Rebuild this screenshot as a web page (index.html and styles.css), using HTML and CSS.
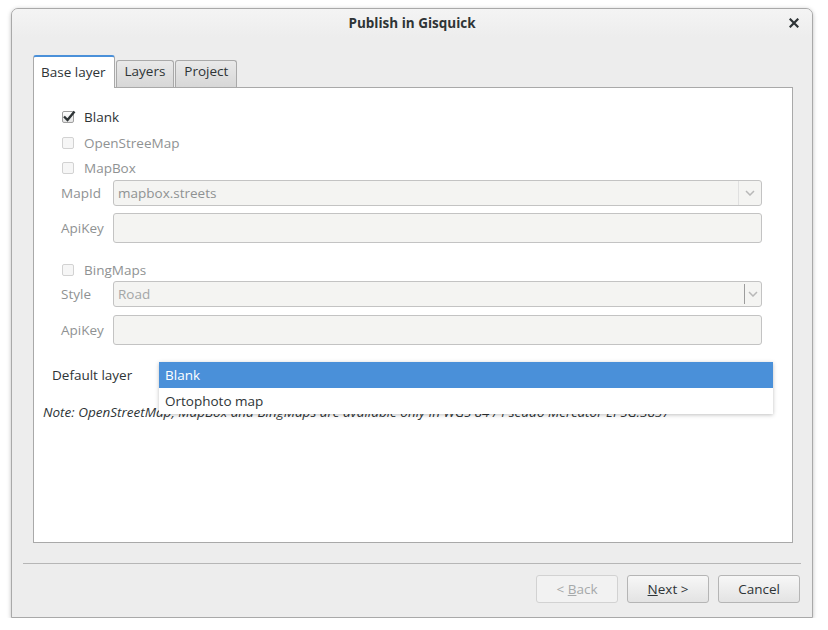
FILE: index.html
```html
<!DOCTYPE html>
<html>
<head>
<meta charset="utf-8">
<link rel="stylesheet" href="styles.css">
</head>
<body>
<div class="window">
  <div class="titlebar">
    <span class="title">Publish in Gisquick</span>
    <svg class="close" width="10" height="10" viewBox="0 0 10 10"><path d="M1.5 1.5 L8.5 8.5 M8.5 1.5 L1.5 8.5" stroke="#2e3436" stroke-width="2.2" stroke-linecap="square"/></svg>
  </div>
  <div class="body">
    <div class="tabs">
      <div class="tab active">Base layer</div>
      <div class="tab">Layers</div>
      <div class="tab">Project</div>
    </div>
    <div class="panel">
      <div class="group">
        <div class="inner">
          <div class="check-row r-blank">
            <span class="cb checked"><svg width="14" height="12" viewBox="0 0 14 12"><path d="M2 6.5 L5.5 10 L12.5 1.5" fill="none" stroke="#2e3436" stroke-width="2.4"/></svg></span>
            <span class="lbl">Blank</span>
          </div>
          <div class="check-row r-osm disabled">
            <span class="cb"></span><span class="lbl">OpenStreeMap</span>
          </div>
          <div class="check-row r-mapbox disabled">
            <span class="cb"></span><span class="lbl">MapBox</span>
          </div>
          <div class="field-row h26">
            <span class="flabel">MapId</span>
            <div class="combo">
              <span class="ctext">mapbox.streets</span>
              <span class="carrow"><svg width="10" height="6" viewBox="0 0 10 6"><path d="M1 1 L5 5 L9 1" fill="none" stroke="#b8b8b8" stroke-width="1.5"/></svg></span>
            </div>
          </div>
          <div class="field-row h30 mt7">
            <span class="flabel">ApiKey</span>
            <div class="entry"></div>
          </div>
          <div class="check-row r-bing disabled">
            <span class="cb"></span><span class="lbl">BingMaps</span>
          </div>
          <div class="field-row h26">
            <span class="flabel">Style</span>
            <div class="combo">
              <span class="ctext light">Road</span>
              <span class="carrow dark"><svg width="10" height="6" viewBox="0 0 10 6"><path d="M1 1 L5 5 L9 1" fill="none" stroke="#b8b8b8" stroke-width="1.5"/></svg></span>
            </div>
          </div>
          <div class="field-row h30 mt8">
            <span class="flabel">ApiKey</span>
            <div class="entry"></div>
          </div>
        </div>
        <div class="default-row">
          <span class="dlabel">Default layer</span>
          <div class="dcombo">
            <div class="popup">
              <div class="item sel">Blank</div>
              <div class="item">Ortophoto map</div>
            </div>
          </div>
        </div>
      </div>
      <div class="note">Note: OpenStreetMap, MapBox and BingMaps are available only in WGS 84 / Pseudo Mercator EPSG:3857</div>
    </div>
    <div class="sep"></div>
    <div class="buttons">
      <button class="btn disabled">&lt; <u>B</u>ack</button>
      <button class="btn"><u>N</u>ext &gt;</button>
      <button class="btn">Cancel</button>
    </div>
  </div>
</div>
</body>
</html>
```
FILE: styles.css
```css
html, body {
  margin: 0;
  padding: 0;
  background: #ffffff;
}
body {
  font-family: "Open Sans", "Noto Sans", sans-serif;
  font-size: 13px;
  color: #2e3436;
}
.window {
  margin: 8px 0 0 11px;
  width: 800px;
  height: 608px;
  border: 1px solid #a9a9a9;
  border-radius: 7px 7px 0 0;
  background: #ededed;
  box-shadow: 0 1px 4px rgba(0,0,0,0.25);
  display: flex;
  flex-direction: column;
  overflow: hidden;
}
.titlebar {
  height: 28px;
  flex: 0 0 28px;
  display: flex;
  align-items: center;
  justify-content: center;
  position: relative;
  background: linear-gradient(#f4f4f4, #ededed);
}
.title {
  font-weight: bold;
  font-size: 13.5px;
  color: #2e3436;
}
.close {
  position: absolute;
  right: 13px;
  top: 9px;
}
.body {
  flex: 1;
  display: flex;
  flex-direction: column;
  padding: 18px 0 0 0;
}
.tabs {
  display: flex;
  align-items: flex-end;
  margin-left: 21px;
  height: 32px;
  position: relative;
  z-index: 2;
}
.tab {
  height: 27px;
  box-sizing: border-box;
  border: 1px solid #a9a9a9;
  border-bottom: none;
  border-radius: 3px 3px 0 0;
  background: linear-gradient(#e9e9e9, #d7d7d7);
  padding: 0 8px;
  line-height: 21px;
  font-size: 13.5px;
  color: #2e3436;
  margin-right: 1px;
}
.tab.active {
  height: 33px;
  background: #ffffff;
  border-top: 2px solid #4a90d9;
  border-color: #4a90d9 #a9a9a9 #a9a9a9 #a9a9a9;
  line-height: 30px;
  margin-bottom: -1px;
  padding: 0 8px 0 7px;
}
.panel {
  margin: 0 19px 0 21px;
  height: 456px;
  box-sizing: border-box;
  border: 1px solid #a9a9a9;
  background: #ffffff;
  padding: 16px 0 0 9px;
}
.group {
  padding-left: 9px;
  padding-right: 20px;
}
.inner {
  padding-left: 9px;
  padding-right: 10px;
}
.check-row {
  display: flex;
  align-items: center;
  height: 26px;
}
.check-row.r-mapbox { height: 24px; }
.check-row.r-bing { height: 23px; margin-top: 15px; }
.cb {
  width: 12px;
  height: 12px;
  box-sizing: border-box;
  border: 1px solid #d2d2d2;
  border-radius: 2px;
  background: #f6f6f6;
  margin-left: 1px;
  margin-right: 10px;
  position: relative;
}
.cb.checked {
  border-color: #a0a0a0;
  background: linear-gradient(#ffffff, #e4e4e4);
}
.cb.checked svg {
  position: absolute;
  left: -1px;
  top: -2px;
}
.lbl {
  font-size: 13.5px;
}
.disabled .lbl {
  color: #8f9293;
}
.field-row {
  display: flex;
  align-items: stretch;
}
.h26 { height: 26px; }
.h30 { height: 30px; }
.mt7 { margin-top: 7px; }
.mt8 { margin-top: 8px; }
.flabel {
  width: 52px;
  flex: 0 0 52px;
  display: flex;
  align-items: center;
  color: #8f9293;
  font-size: 13.5px;
}
.combo, .entry {
  flex: 1;
  box-sizing: border-box;
  border: 1px solid #c3c3c3;
  border-radius: 3px;
  background: #f4f4f2;
  display: flex;
  align-items: center;
}
.ctext {
  flex: 1;
  padding-left: 4px;
  color: #8f9293;
  font-size: 13.5px;
}
.ctext.light { color: #a3a6a7; }
.carrow {
  width: 22px;
  height: 100%;
  border-left: 1px solid #e0e0e0;
  display: flex;
  align-items: center;
  justify-content: center;
}
.carrow.dark {
  width: 16px;
  height: 20px;
  border-left: 1px solid #9c9c9c;
}
.default-row {
  display: flex;
  align-items: center;
  height: 26px;
  margin-top: 17px;
}
.dlabel {
  width: 107px;
  flex: 0 0 107px;
  font-size: 13.5px;
}
.dcombo {
  flex: 1;
  height: 26px;
  position: relative;
}
.popup {
  position: absolute;
  left: 0;
  top: 0;
  right: -1px;
  background: #ffffff;
  box-shadow: 0 1px 4px rgba(0,0,0,0.25);
  z-index: 5;
}
.item {
  height: 26px;
  line-height: 26px;
  padding-left: 6px;
  font-size: 13.5px;
  color: #2e3436;
}
.item.sel {
  background: #4a90d9;
  color: #ffffff;
}
.note {
  margin-top: 15px;
  font-style: italic;
  font-size: 13.5px;
  color: #2e3436;
  white-space: nowrap;
}
.sep {
  margin: 20px 11px 0 11px;
  height: 1px;
  background: #b6b6b6;
  flex: 0 0 1px;
}
.buttons {
  display: flex;
  justify-content: flex-end;
  gap: 9px;
  margin: 11px 12px 0 0;
}
.btn {
  width: 82px;
  height: 28px;
  box-sizing: border-box;
  border: 1px solid #b5b5b5;
  border-radius: 3px;
  background: linear-gradient(#f7f7f7, #e3e3e3);
  font-family: "Open Sans", "Noto Sans", sans-serif;
  font-size: 13.5px;
  color: #2e3436;
  padding: 0;
}
.btn.disabled {
  background: #f2f2f2;
  border-color: #d2d2d2;
  color: #a6a9aa;
}
```
